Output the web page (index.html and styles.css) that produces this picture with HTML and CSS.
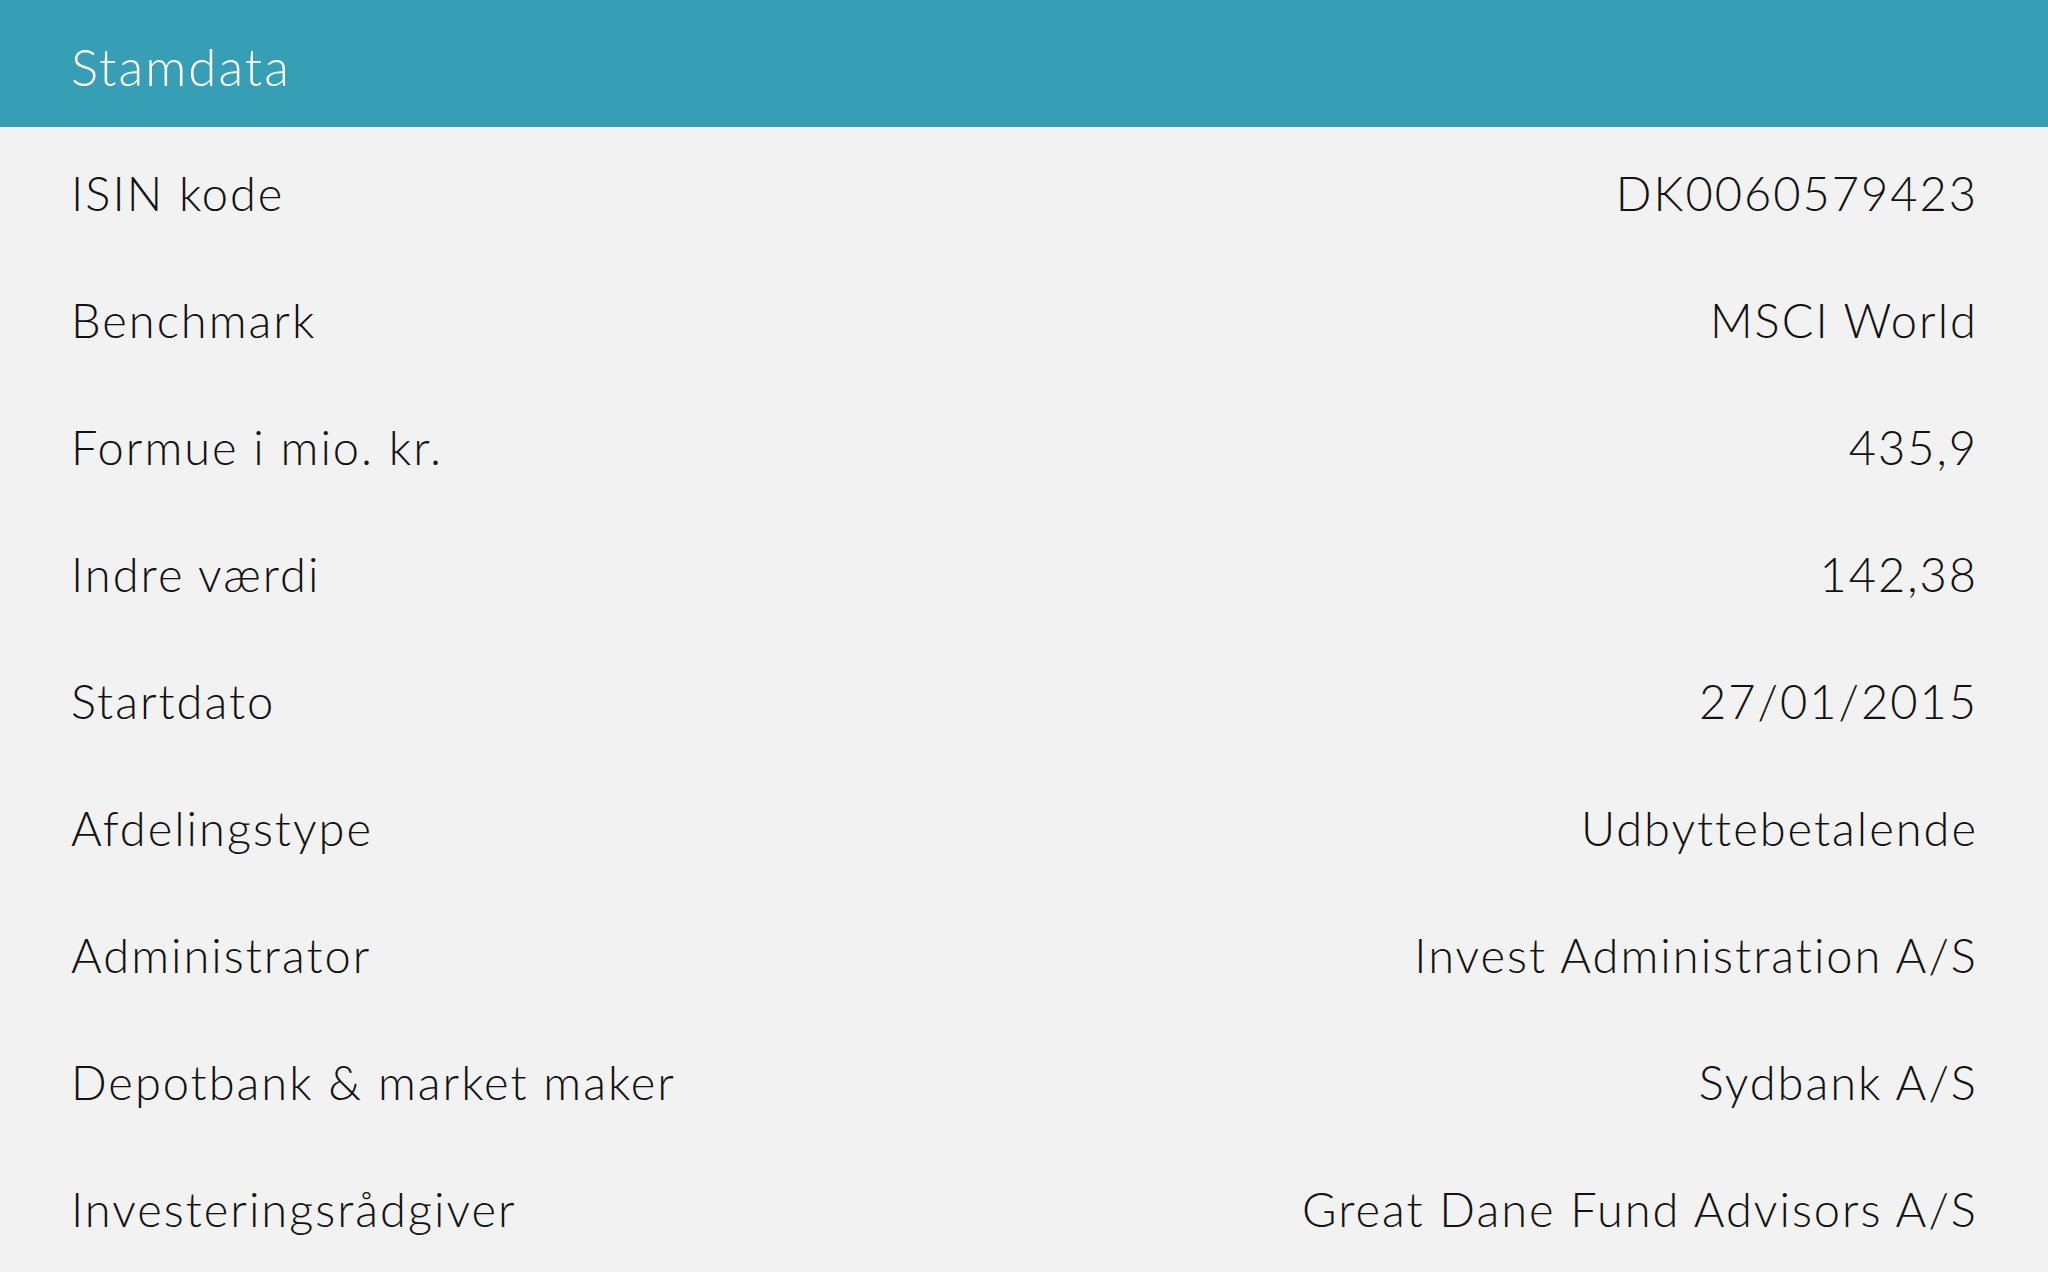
FILE: index.html
```html
<!DOCTYPE html>
<html lang="da">
<head>
<meta charset="utf-8">
<title>Stamdata</title>
<link rel="stylesheet" href="styles.css">
</head>
<body>
<section class="panel">
  <header class="panel-head">Stamdata</header>
  <div class="rows">
    <div class="row"><span class="label">ISIN kode</span><span class="value">DK0060579423</span></div>
    <div class="row"><span class="label">Benchmark</span><span class="value">MSCI World</span></div>
    <div class="row"><span class="label">Formue i mio. kr.</span><span class="value">435,9</span></div>
    <div class="row"><span class="label">Indre værdi</span><span class="value">142,38</span></div>
    <div class="row"><span class="label">Startdato</span><span class="value">27/01/2015</span></div>
    <div class="row"><span class="label">Afdelingstype</span><span class="value">Udbyttebetalende</span></div>
    <div class="row"><span class="label">Administrator</span><span class="value">Invest Administration A/S</span></div>
    <div class="row"><span class="label">Depotbank &amp; market maker</span><span class="value">Sydbank A/S</span></div>
    <div class="row"><span class="label">Investeringsrådgiver</span><span class="value">Great Dane Fund Advisors A/S</span></div>
  </div>
</section>
</body>
</html>
```
FILE: styles.css
```css
html, body {
  margin: 0;
  padding: 0;
  background: #f2f2f2;
}
body {
  font-family: "Lato", "Open Sans", sans-serif;
  font-weight: 300;
  color: #111;
}
.panel {
  width: 100%;
}
.panel-head {
  height: 127px;
  background: #369fb5;
  color: #fff;
  font-size: 51px;
  letter-spacing: 2px;
  display: flex;
  align-items: center;
  padding: 6px 71px 0;
  box-sizing: border-box;
}
.rows {
  display: flex;
  flex-direction: column;
}
.row {
  height: 127px;
  box-sizing: border-box;
  display: flex;
  justify-content: space-between;
  align-items: center;
  padding: 5px 70px 0 71px;
  font-size: 47px;
  letter-spacing: 2px;
}
```
